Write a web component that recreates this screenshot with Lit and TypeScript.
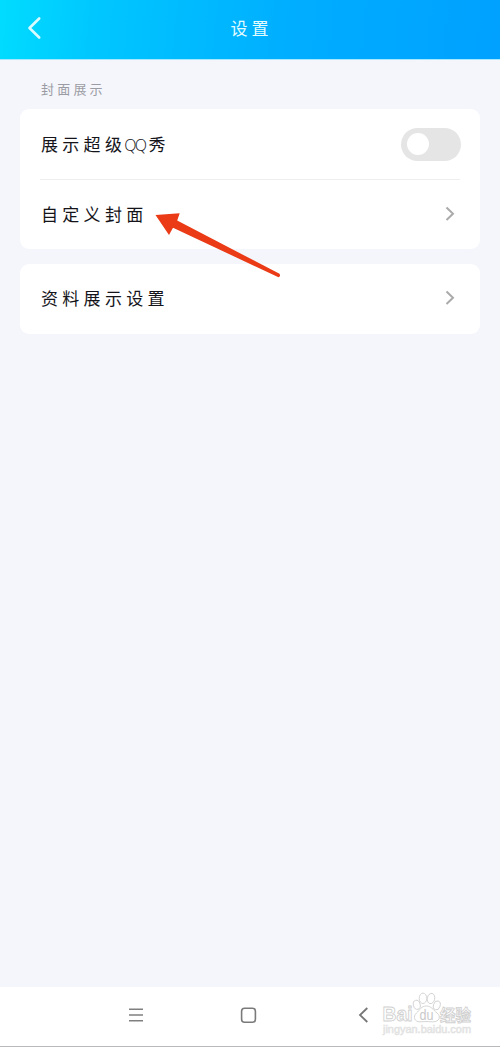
import { LitElement, html, css, svg } from "lit";
import { customElement } from "lit/decorators.js";

const chevron = svg`<path d="M1.5 1.5 L8 7.8 L1.5 14" fill="none" stroke="#aaaaaa" stroke-width="2"/>`;

@customElement("app-root")
export class AppRoot extends LitElement {
  static styles = css`
    :host {
      display: flex;
      flex-direction: column;
      position: relative;
      box-sizing: border-box;
      width: 500px;
      height: 1047px;
      background: #f5f6fb;
      color: #14141a;
      font-family: "Noto Sans CJK SC", sans-serif;
      font-weight: 400;
    }
    svg { display: block; flex: none; overflow: visible; }
    header {
      display: grid;
      grid-template-columns: 60px 1fr 60px;
      align-items: center;
      box-sizing: border-box;
      height: 60px;
      padding-bottom: 3px;
      background: linear-gradient(95deg, #00dcff 0%, #00c6ff 20%, #00aeff 58%, #00a1ff 100%);
      border-bottom: 1px solid #a5e8ff;
    }
    .back { margin-left: 27px; }
    h1 {
      margin: 0;
      text-align: center;
      color: #e2fcff;
      font-size: 17px;
      line-height: 24px;
      font-weight: 400;
      letter-spacing: 4px;
      text-indent: 3px;
    }
    main { flex: 1; padding: 0 20px; }
    .label {
      height: 49px;
      line-height: 57px;
      padding-left: 21px;
      box-sizing: border-box;
      color: #9b9ca3;
      font-size: 13px;
      letter-spacing: 3.2px;
    }
    .card { background: #fff; border-radius: 9px; margin-bottom: 15px; }
    .row {
      display: flex;
      align-items: center;
      justify-content: space-between;
      box-sizing: border-box;
      height: 69px;
      padding: 0 25px 2px 21px;
      font-size: 17px;
      line-height: 24px;
      letter-spacing: 4.3px;
      white-space: nowrap;
    }
    .row.single { height: 70px; }
    .row.wide { height: 70px; padding: 0 19px 0 21px; }
    .latin {
      font-family: "Open Sans", sans-serif;
      font-weight: 300;
      font-size: 16px;
      letter-spacing: -1.6px;
      margin-left: -2px;
      margin-right: 3px;
    }
    .line { height: 1px; margin: 0 20px; background: #eeeeef; }
    .switch {
      display: flex;
      align-items: center;
      box-sizing: border-box;
      width: 60px;
      height: 33px;
      padding-left: 6px;
      border-radius: 17px;
      background: #e5e5e5;
    }
    .knob { width: 22px; height: 22px; border-radius: 50%; background: #fff; }
    .arrow { position: absolute; left: 150px; top: 205px; }
    nav {
      display: grid;
      grid-template-columns: 128px 112px 118px 1fr;
      align-items: center;
      box-sizing: border-box;
      height: 60px;
      padding-bottom: 3px;
      background: #fff;
      border-bottom: 1px solid #b9b9bb;
    }
    .mark { position: absolute; left: 378px; top: 988px; }
    .mark text { font-family: "Liberation Sans", "Noto Sans CJK SC", sans-serif; }
  `;

  render() {
    return html`
      <header>
        <svg class="back" width="16" height="24" viewBox="0 0 16 24">
          <path d="M12.2 2.5 L2.5 12 L12.2 21.5" fill="none" stroke="#d9fbff" stroke-width="2.6" stroke-linecap="round" stroke-linejoin="round"/>
        </svg>
        <h1>设置</h1>
      </header>
      <main>
        <div class="label">封面展示</div>
        <section class="card">
          <div class="row wide">
            <span>展示超级<span class="latin">QQ</span>秀</span>
            <div class="switch"><div class="knob"></div></div>
          </div>
          <div class="line"></div>
          <div class="row">
            <span>自定义封面</span>
            <svg width="10" height="16">${chevron}</svg>
          </div>
        </section>
        <section class="card">
          <div class="row single">
            <span>资料展示设置</span>
            <svg width="10" height="16">${chevron}</svg>
          </div>
        </section>
      </main>
      <svg class="arrow" width="134" height="76">
        <path d="M5.5 10 L29.7 8.3 L27.2 15.6 L129.5 68.8 Q131 71.5 128.5 72.2 L23 22.8 L19 30 Z" fill="#ea3a16"/>
      </svg>
      <nav>
        <span></span>
        <svg width="16" height="16">
          <path d="M1 2.2H15M1 8H15M1 13.8H15" stroke="#808080" stroke-width="1.5"/>
        </svg>
        <svg width="17" height="17">
          <rect x="1.6" y="1.2" width="13.8" height="14" rx="3" fill="none" stroke="#7a7a7a" stroke-width="1.6"/>
        </svg>
        <svg width="12" height="18">
          <path d="M9.3 2 L2 9 L9.3 16" fill="none" stroke="#777777" stroke-width="1.8"/>
        </svg>
      </nav>
      <svg class="mark" width="100" height="52">
        <g fill="#fff" stroke="#d0d0d0" stroke-width="0.9">
          <ellipse cx="38.8" cy="16.8" rx="3.4" ry="4.6" transform="rotate(-15 38.8 16.8)"/>
          <ellipse cx="45" cy="10.3" rx="3.8" ry="5.2"/>
          <ellipse cx="53" cy="10.5" rx="3.7" ry="5.2" transform="rotate(12 53 10.5)"/>
          <ellipse cx="58.8" cy="17.4" rx="3.3" ry="4.6" transform="rotate(18 58.8 17.4)"/>
          <path d="M48.5 18C43 18 42 22 38.5 25C34.5 28.5 36.5 34 42 33.8C46 33.5 50 33.5 54.5 33.8C62 34 63 28 59 25C55 22 53.5 18 48.5 18Z"/>
          <text x="4.5" y="33" font-size="20.5" font-weight="700" textLength="30" lengthAdjust="spacingAndGlyphs">Bai</text>
          <text x="62" y="33" font-size="16" font-weight="700" textLength="31" lengthAdjust="spacingAndGlyphs">经验</text>
        </g>
        <text x="41.5" y="31.5" font-size="14" fill="#c9c9c9" textLength="14" lengthAdjust="spacingAndGlyphs">du</text>
        <text x="5" y="45" font-size="10.5" font-weight="400" fill="#e6e6e6" stroke="#e2e2e2" stroke-width="0.5" textLength="88" lengthAdjust="spacingAndGlyphs">jingyan.baidu.com</text>
      </svg>
    `;
  }
}
